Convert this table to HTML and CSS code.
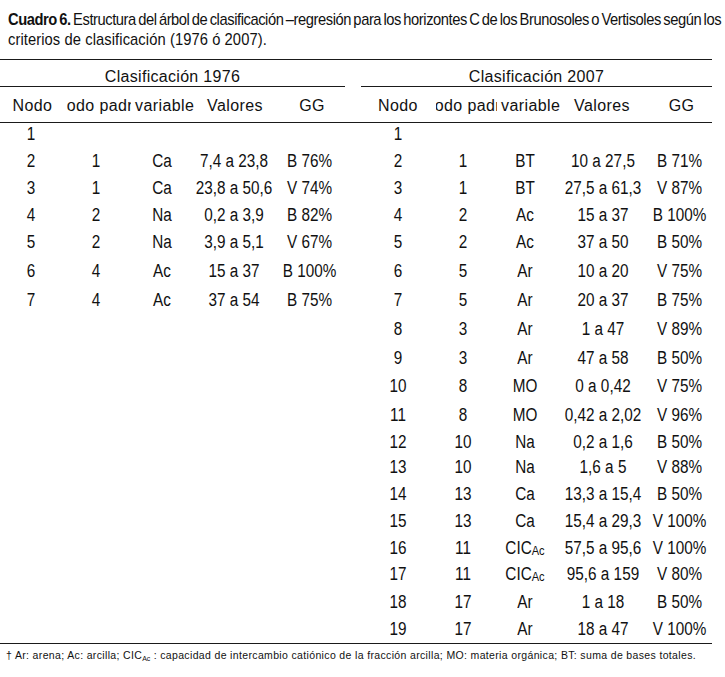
FILE: index.html
```html
<!DOCTYPE html>
<html lang="es">
<head>
<meta charset="utf-8">
<title>Cuadro 6</title>
<link rel="stylesheet" href="styles.css">
</head>
<body>
<div class="title">
  <span class="line line-1"><b>Cuadro 6.</b> Estructura del árbol de clasificación –regresión para los horizontes C de los Brunosoles o Vertisoles según los</span>
  <span class="line line-2">criterios de clasificación (1976 ó 2007).</span>
</div>
<div class="tables">
  <section class="tbl tbl-left">
    <div class="caption">Clasificación 1976</div>
    <div class="head">
      <span>Nodo</span><span class="clip"><span>Nodo padre</span></span><span>variable</span><span>Valores</span><span>GG</span>
    </div>
    <div class="body">
      <div class="row"><span>1</span><span></span><span></span><span></span><span></span></div>
      <div class="row"><span>2</span><span>1</span><span>Ca</span><span>7,4 a 23,8</span><span>B 76%</span></div>
      <div class="row"><span>3</span><span>1</span><span>Ca</span><span>23,8 a 50,6</span><span>V 74%</span></div>
      <div class="row"><span>4</span><span>2</span><span>Na</span><span>0,2 a 3,9</span><span>B 82%</span></div>
      <div class="row"><span>5</span><span>2</span><span>Na</span><span>3,9 a 5,1</span><span>V 67%</span></div>
      <div class="row"><span>6</span><span>4</span><span>Ac</span><span>15 a 37</span><span>B 100%</span></div>
      <div class="row"><span>7</span><span>4</span><span>Ac</span><span>37 a 54</span><span>B 75%</span></div>
    </div>
  </section>
  <section class="tbl tbl-right">
    <div class="caption">Clasificación 2007</div>
    <div class="head">
      <span>Nodo</span><span class="clip"><span>Nodo padre</span></span><span>variable</span><span>Valores</span><span>GG</span>
    </div>
    <div class="body">
      <div class="row"><span>1</span><span></span><span></span><span></span><span></span></div>
      <div class="row"><span>2</span><span>1</span><span>BT</span><span>10 a 27,5</span><span>B 71%</span></div>
      <div class="row"><span>3</span><span>1</span><span>BT</span><span>27,5 a 61,3</span><span>V 87%</span></div>
      <div class="row"><span>4</span><span>2</span><span>Ac</span><span>15 a 37</span><span>B 100%</span></div>
      <div class="row"><span>5</span><span>2</span><span>Ac</span><span>37 a 50</span><span>B 50%</span></div>
      <div class="row"><span>6</span><span>5</span><span>Ar</span><span>10 a 20</span><span>V 75%</span></div>
      <div class="row"><span>7</span><span>5</span><span>Ar</span><span>20 a 37</span><span>B 75%</span></div>
      <div class="row"><span>8</span><span>3</span><span>Ar</span><span>1 a 47</span><span>V 89%</span></div>
      <div class="row"><span>9</span><span>3</span><span>Ar</span><span>47 a 58</span><span>B 50%</span></div>
      <div class="row"><span>10</span><span>8</span><span>MO</span><span>0 a 0,42</span><span>V 75%</span></div>
      <div class="row"><span>11</span><span>8</span><span>MO</span><span>0,42 a 2,02</span><span>V 96%</span></div>
      <div class="row"><span>12</span><span>10</span><span>Na</span><span>0,2 a 1,6</span><span>B 50%</span></div>
      <div class="row"><span>13</span><span>10</span><span>Na</span><span>1,6 a 5</span><span>V 88%</span></div>
      <div class="row"><span>14</span><span>13</span><span>Ca</span><span>13,3 a 15,4</span><span>B 50%</span></div>
      <div class="row"><span>15</span><span>13</span><span>Ca</span><span>15,4 a 29,3</span><span>V 100%</span></div>
      <div class="row"><span>16</span><span>11</span><span><span class="cic">CIC<sub>Ac</sub></span></span><span>57,5 a 95,6</span><span>V 100%</span></div>
      <div class="row"><span>17</span><span>11</span><span><span class="cic">CIC<sub>Ac</sub></span></span><span>95,6 a 159</span><span>V 80%</span></div>
      <div class="row"><span>18</span><span>17</span><span>Ar</span><span>1 a 18</span><span>B 50%</span></div>
      <div class="row"><span>19</span><span>17</span><span>Ar</span><span>18 a 47</span><span>V 100%</span></div>
    </div>
  </section>
</div>
<p class="foot">† Ar: arena; Ac: arcilla; CIC<sub>Ac</sub> : capacidad de intercambio catiónico de la fracción arcilla; MO: materia orgánica; BT: suma de bases totales.</p>
</body>
</html>
```

FILE: styles.css
```css
html, body {
  margin: 0;
  padding: 0;
  background: #fff;
  color: #111;
}

body {
  width: 725px;
  font-family: "Liberation Sans", Arial, sans-serif;
}

/* ---------- title ---------- */
.title {
  padding: 10px 0 0 8px;
  margin-bottom: 9px;
  font-size: 17px;
  line-height: 20px;
  white-space: nowrap;
}

.title .line {
  display: block;
  transform-origin: left center;
  transform: scaleX(0.866);
}

.title .line-1 {
  letter-spacing: -0.5px;
  word-spacing: -1.5px;
}

.title .line-2 {
  letter-spacing: 0.1px;
}

.title b {
  font-weight: bold;
}

/* ---------- tables ---------- */
.tables {
  display: flex;
  width: 712px;
  border-top: 1px solid #1a1a1a;
  border-bottom: 1px solid #1a1a1a;
}

.tbl-left {
  width: 361px;
}

.tbl-right {
  width: 351px;
}

.caption {
  font-size: 16px;
  letter-spacing: 0.3px;
  line-height: 19px;
  padding-top: 7px;
  text-align: center;
  border-bottom: 1px solid #1a1a1a;
}

.tbl-left .caption {
  margin-right: 16px;
}

.head {
  display: grid;
  padding: 9px 0 6px;
  line-height: 20px;
  border-bottom: 1px solid #1a1a1a;
  font-size: 16px;
  letter-spacing: 0.4px;
}

.tbl-left .head {
  grid-template-columns: 65px 70px 56px 88px 66px 16px;
}

.tbl-right .head {
  grid-template-columns: 74px 66px 52px 98px 61px;
}

.head > span {
  text-align: center;
  white-space: nowrap;
}

.head .clip {
  display: flex;
  justify-content: center;
  overflow: hidden;
  margin: 0 4px 0 1px;
}

.head .clip > span {
  flex: none;
}

.body {
  display: grid;
  grid-template-rows: 27px 27px 27px 27px 28px 29px 29.5px 29px 28.5px 28.5px 28.5px 25.5px 25.5px 28px 26.5px 26px 27.5px 27.5px 26.5px;
  margin-top: -3.5px;
  padding-bottom: 1px;
  font-size: 18px;
}

.row {
  display: grid;
  align-items: center;
  padding-top: 1px;
  line-height: 20px;
}

.tbl-left .row {
  grid-template-columns: 62px 68px 64px 80px 71px 16px;
}

.tbl-right .row {
  grid-template-columns: 74px 56px 68px 88px 65px;
}

.row > span {
  display: flex;
  justify-content: center;
  white-space: nowrap;
  transform: scaleX(0.85);
}

.cic {
  display: block;
}

.cic sub {
  font-size: 13px;
  vertical-align: -1px;
  line-height: 0;
}

/* ---------- footnote ---------- */
.foot {
  margin: 0;
  padding: 4px 0 0 6px;
  font-size: 10.5px;
  line-height: 14px;
  letter-spacing: 0.35px;
  white-space: nowrap;
}

.foot sub {
  font-size: 7px;
  vertical-align: -2px;
  line-height: 0;
  letter-spacing: 0;
}
```
